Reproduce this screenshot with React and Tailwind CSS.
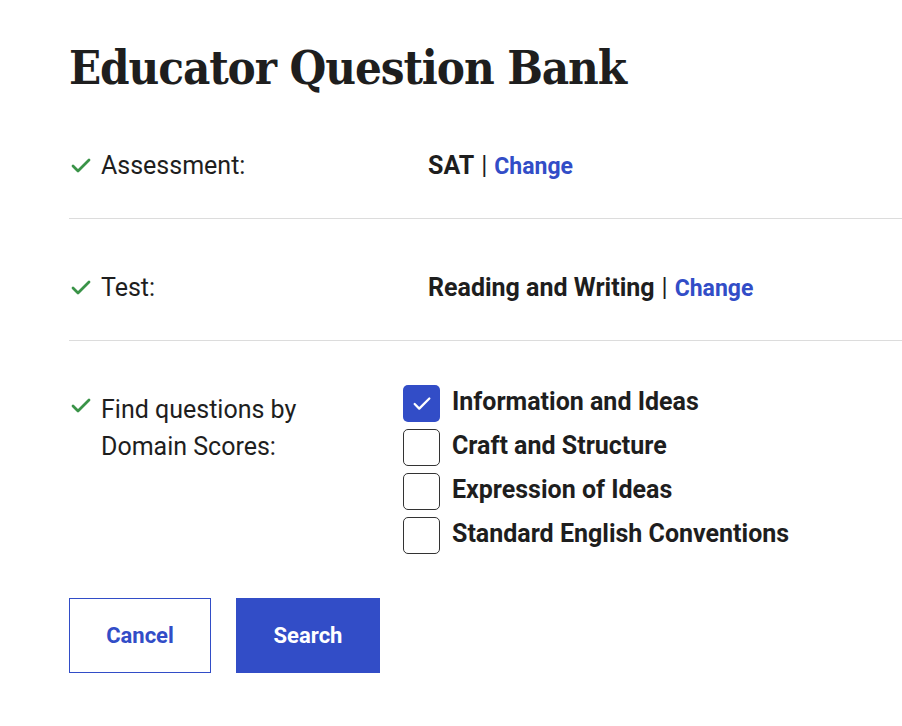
import { Check } from 'lucide-react';

const DOMAINS = [
  { label: 'Information and Ideas', checked: true },
  { label: 'Craft and Structure', checked: false },
  { label: 'Expression of Ideas', checked: false },
  { label: 'Standard English Conventions', checked: false },
];

function Done({ children }) {
  return (
    <div className="flex items-start gap-[8px]">
      <Check size={24} strokeWidth={2.8} className="text-[#3a9348] mt-[3px] shrink-0" />
      <div>{children}</div>
    </div>
  );
}

export default function App() {
  return (
    <div className="bg-white min-h-screen pl-[69px] text-[#1e1e1e]" style={{ fontFamily: 'Roboto, "Liberation Sans", sans-serif' }}>
      <h1
        className="pt-[38px] text-[47px] leading-[60px] font-bold tracking-[-1.1px]"
        style={{ fontFamily: '"DejaVu Serif Condensed", "DejaVu Serif", serif', fontStretch: 'condensed' }}
      >
        Educator Question Bank
      </h1>

      {/* Assessment */}
      <div className="flex pt-[53px] pb-[36px] border-b border-[#dcdcdc] text-[25px] leading-[30px]">
        <div className="w-[359px]">
          <Done>Assessment:</Done>
        </div>
        <div className="flex items-baseline gap-[7px]">
          <span className="font-bold">SAT</span>
          <span>|</span>
          <a className="font-bold text-[#324dc7] text-[23px]">Change</a>
        </div>
      </div>

      {/* Test */}
      <div className="flex pt-[54px] pb-[36px] border-b border-[#dcdcdc] text-[25px] leading-[30px]">
        <div className="w-[359px]">
          <Done>Test:</Done>
        </div>
        <div className="flex items-baseline gap-[7px]">
          <span className="font-bold">Reading and Writing</span>
          <span>|</span>
          <a className="font-bold text-[#324dc7] text-[23px]">Change</a>
        </div>
      </div>

      {/* Domains */}
      <div className="flex pt-[44px] text-[25px] leading-[30px]">
        <div className="w-[334px] pt-[6px] leading-[37px]">
          <Done>
            Find questions by
            <br />
            Domain Scores:
          </Done>
        </div>
        <div className="flex flex-col gap-[7px]">
          {DOMAINS.map((d) => (
            <label key={d.label} className="flex items-center gap-[12px]">
              <span
                className={`w-[37px] h-[37px] rounded-[5px] flex items-center justify-center ${
                  d.checked ? 'bg-[#324dc7]' : 'border border-[#333] bg-white'
                }`}
              >
                {d.checked && <Check size={22} strokeWidth={2.5} className="text-white" />}
              </span>
              <span className="font-bold -mt-[4px]">{d.label}</span>
            </label>
          ))}
        </div>
      </div>

      <div className="flex gap-[25px] pt-[44px]">
        <button className="w-[142px] h-[75px] border border-[#324dc7] text-[#324dc7] font-bold text-[22px]">
          Cancel
        </button>
        <button className="w-[144px] h-[75px] bg-[#324dc7] text-white font-bold text-[22px]">
          Search
        </button>
      </div>
    </div>
  );
}
